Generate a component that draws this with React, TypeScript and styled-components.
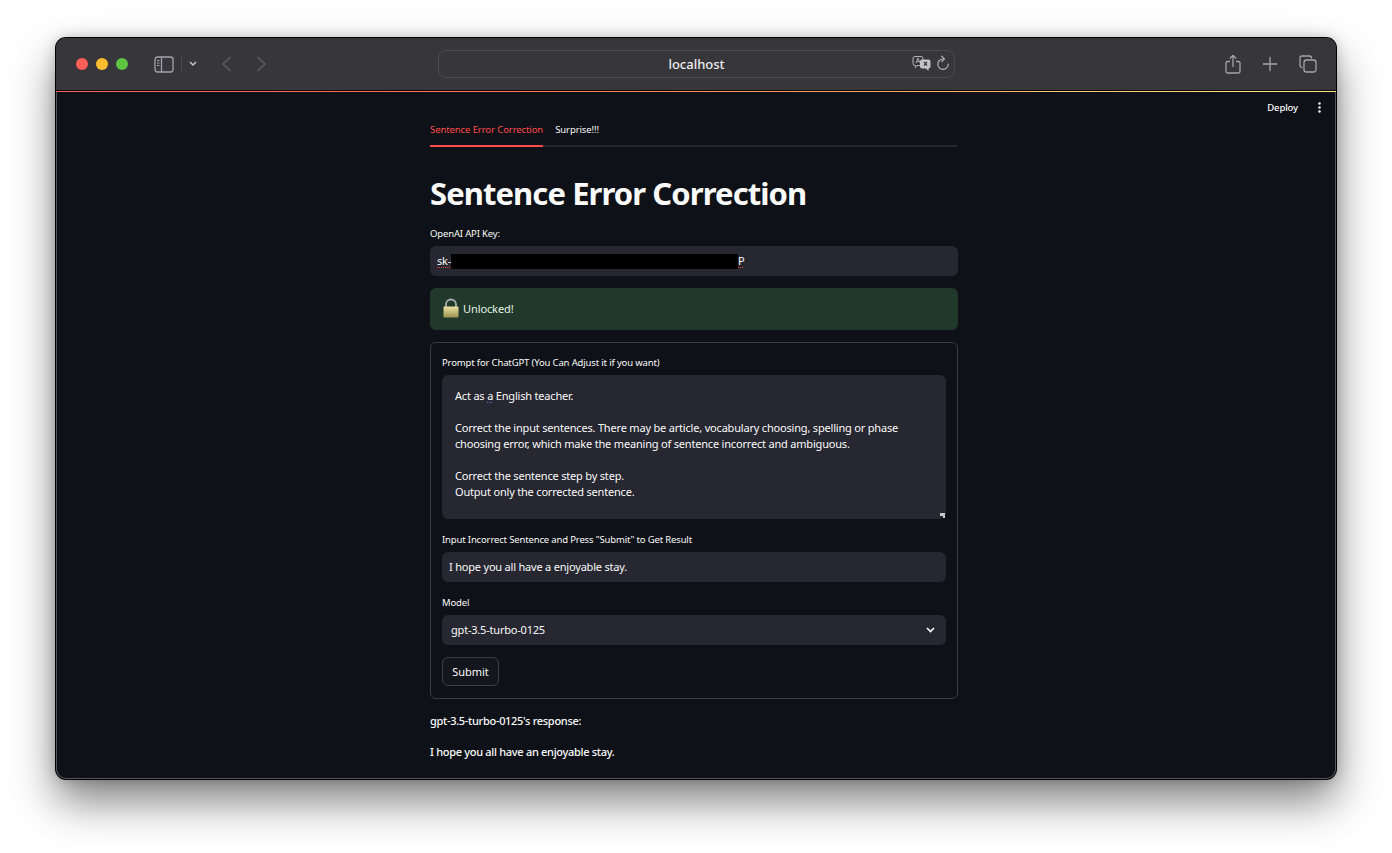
import React from "react";
import styled, { createGlobalStyle } from "styled-components";

const GlobalStyle = createGlobalStyle`
  html, body {
    margin: 0;
    padding: 0;
    background: #fff;
  }
  body {
    font-family: "Noto Sans", "Open Sans", sans-serif;
    color: #fafafa;
  }
`;

const Desktop = styled.div`
  width: 1392px;
  height: 853px;
  padding: 38px 56px 0;
  box-sizing: border-box;
  overflow: hidden;
`;

const Browser = styled.div`
  width: 1280px;
  height: 741px;
  border-radius: 10px;
  overflow: hidden;
  display: flex;
  flex-direction: column;
  background: #0e1117;
  box-shadow:
    0 0 0 1px #000,
    inset 0 0 0 1px #55555a,
    0 22px 44px rgba(0, 0, 0, 0.5),
    0 0 14px rgba(0, 0, 0, 0.22);
`;

const TitleBar = styled.div`
  height: 53px;
  flex: none;
  background: #37363b;
  display: flex;
  align-items: center;
  position: relative;
  border-bottom: 1px solid #0b0b0d;
  box-sizing: border-box;
`;

const Lights = styled.div`
  display: flex;
  gap: 8px;
  margin-left: 20px;
`;

const Light = styled.span<{ $color: string }>`
  width: 12px;
  height: 12px;
  border-radius: 50%;
  background: ${(p) => p.$color};
`;

const ToolIcon = styled.svg<{ $gap?: number }>`
  display: block;
  flex: none;
  margin-left: ${(p) => p.$gap ?? 0}px;
`;

const ToolDivider = styled.span`
  width: 1px;
  height: 18px;
  margin-left: 7px;
  background: #4a494e;
`;

const AddressBar = styled.div`
  position: absolute;
  left: 382px;
  top: 12px;
  width: 517px;
  height: 28px;
  box-sizing: border-box;
  border: 1px solid #4b4a50;
  border-radius: 8px;
  display: flex;
  align-items: center;
  justify-content: center;
  font-size: 13px;
  font-weight: 500;
  color: #eeeeef;
`;

const AddressIcons = styled.div`
  position: absolute;
  right: 4px;
  top: 4px;
  display: flex;
  align-items: center;
  gap: 5px;
`;

const RightTools = styled.div`
  margin-left: auto;
  margin-right: 19px;
  display: flex;
  align-items: center;
  gap: 22px;
`;

const Decoration = styled.div`
  height: 1px;
  flex: none;
  background: linear-gradient(90deg, #ff5f57, #ff7a4d 40%, #ffe98a);
`;

const Page = styled.div`
  flex: 1;
  min-height: 0;
  overflow: hidden;
  position: relative;
  display: flex;
  justify-content: center;
  padding-right: 4px;
`;

const AppHeader = styled.div`
  position: absolute;
  top: 9px;
  right: 15px;
  display: flex;
  align-items: center;
  gap: 20px;
  font-size: 9.5px;
  letter-spacing: -0.12px;
  font-weight: 500;
  color: #fafafa;
`;

const Column = styled.main`
  width: 528px;
  padding-top: 25px;
  display: flex;
  flex-direction: column;
`;

const Tabs = styled.div`
  display: flex;
  gap: 12px;
  height: 28px;
  border-bottom: 2px solid #262730;
`;

const Tab = styled.div<{ $active?: boolean }>`
  font-size: 9.5px;
  letter-spacing: -0.09px;
  line-height: 26px;
  height: 28px;
  color: ${(p) => (p.$active ? "#ff4b4b" : "#fafafa")};
  box-shadow: ${(p) => (p.$active ? "0 2px 0 #ff4b4b" : "none")};
`;

const Title = styled.h1`
  margin: 26px 0 0;
  font-size: 31px;
  letter-spacing: -0.92px;
  line-height: 40px;
  font-weight: 700;
  color: #fafafa;
`;

const FieldLabel = styled.label`
  display: block;
  font-size: 9.5px;
  letter-spacing: -0.15px;
  line-height: 14px;
  color: #fafafa;
  padding-top: 1px;
  margin-bottom: 5px;
`;

const KeyBlock = styled.div`
  margin-top: 13px;
`;

const InputBox = styled.div`
  height: 30px;
  box-sizing: border-box;
  padding: 0 7px 2px;
  border-radius: 6px;
  background: #262730;
  display: flex;
  align-items: center;
  font-size: 11px;
  letter-spacing: -0.2px;
  color: #fafafa;
`;

const Squiggle = styled.span<{ $color?: string }>`
  text-decoration: underline dotted ${(p) => p.$color ?? "#e8403c"} 1px;
  text-underline-offset: 2px;
`;

const Redacted = styled.span`
  display: inline-block;
  width: 287px;
  height: 15px;
  margin-top: 2px;
  background: #000;
`;

const Alert = styled.div`
  margin-top: 12px;
  height: 42px;
  box-sizing: border-box;
  padding: 0 0 2px 13px;
  border-radius: 6px;
  background: #21392b;
  display: flex;
  align-items: center;
  gap: 4px;
  font-size: 11px;
  letter-spacing: -0.1px;
  color: #e6f1e6;
`;

const FormCard = styled.div`
  margin-top: 12px;
  height: 357px;
  box-sizing: border-box;
  border: 1px solid #3c3e46;
  border-radius: 6px;
  padding: 12px 11px;
`;

const PromptArea = styled.div`
  position: relative;
  height: 144px;
  box-sizing: border-box;
  border-radius: 6px;
  background: #262730;
  padding: 13px 13px;
  font-size: 11px;
  letter-spacing: -0.19px;
  line-height: 16px;
  white-space: pre-wrap;
`;

const ResizeGrip = styled.svg`
  position: absolute;
  right: 1px;
  bottom: 1px;
`;

const FieldGroup = styled.div`
  margin-top: 13px;
`;

const SelectBox = styled(InputBox)`
  justify-content: space-between;
  padding: 0 11px 2px 9px;

  svg {
    margin-top: 2px;
  }
`;

const SubmitButton = styled.button`
  display: block;
  margin-top: 12px;
  width: 57px;
  height: 29px;
  padding: 0;
  border: 1px solid #3c3e46;
  border-radius: 6px;
  background: #13161d;
  color: #fafafa;
  font-family: inherit;
  font-size: 11px;
`;

const ResponseText = styled.p`
  margin: 14px 0 0;
  font-size: 11px;
  letter-spacing: -0.3px;
  font-weight: 500;
  line-height: 16px;
  color: #fafafa;

  & + & {
    margin-top: 15px;
  }
`;

const iconStroke = "#a5a4a8";

function SidebarIcon() {
  return (
    <ToolIcon $gap={26} width="20" height="17" viewBox="0 0 20 17" fill="none">
      <rect x="1" y="1" width="18" height="15" rx="2.5" stroke={iconStroke} strokeWidth="1.3" />
      <path d="M7.5 1v15" stroke={iconStroke} strokeWidth="1.3" />
      <path d="M3 4.5h2.5M3 7h2.5M3 9.5h2.5" stroke={iconStroke} strokeWidth="1.1" />
    </ToolIcon>
  );
}

function TranslateIcon() {
  return (
    <svg width="19" height="17" viewBox="0 0 19 17" fill="none">
      <path d="M3 1.5h6a2 2 0 0 1 2 2v5a2 2 0 0 1-2 2H5l-1.5 2v-2H3a2 2 0 0 1-2-2v-5a2 2 0 0 1 2-2z" stroke="#b5b4b8" strokeWidth="1" />
      <path d="M4 8l2-5 2 5M4.8 6.4h2.4" stroke="#b5b4b8" strokeWidth="0.9" />
      <path d="M10 4.5h6.5a2 2 0 0 1 2 2v5a2 2 0 0 1-2 2V16l-2.5-2.5H10a2 2 0 0 1-2-2v-5a2 2 0 0 1 2-2z" fill="#c4c3c7" />
      <path d="M12 7l3 3.6M15 7l-3 3.6" stroke="#37363b" strokeWidth="1.2" />
    </svg>
  );
}

function ReloadIcon() {
  return (
    <svg width="14" height="17" viewBox="0 0 14 17" fill="none">
      <path d="M7 4a5.2 5.2 0 1 0 5.2 5.2" stroke="#b5b4b8" strokeWidth="1.2" strokeLinecap="round" />
      <path d="M5.6 1.2L8.4 4 5.6 6.6" stroke="#b5b4b8" strokeWidth="1.2" strokeLinecap="round" strokeLinejoin="round" />
    </svg>
  );
}

function LockIcon() {
  return (
    <svg width="16" height="20" viewBox="0 0 16 20">
      <defs>
        <linearGradient id="lockBody" x1="0" y1="0" x2="0" y2="1">
          <stop offset="0" stopColor="#ece2a4" />
          <stop offset="1" stopColor="#9c9350" />
        </linearGradient>
      </defs>
      <path d="M3 10V6.5a5 5 0 0 1 10 0V10" fill="none" stroke="#a9adb3" strokeWidth="1.8" />
      <rect x="0.5" y="8.5" width="15" height="11" rx="1" fill="url(#lockBody)" />
    </svg>
  );
}

const PROMPT_REST = ` English teacher.

Correct the input sentences. There may be article, vocabulary choosing, spelling or phase
choosing error, which make the meaning of sentence incorrect and ambiguous.

Correct the sentence step by step.
Output only the corrected sentence.`;

export default function App() {
  return (
    <>
      <GlobalStyle />
      <Desktop>
        <Browser>
          <TitleBar>
            <Lights>
              <Light $color="#ff5f57" />
              <Light $color="#febc2e" />
              <Light $color="#5ec442" />
            </Lights>
            <SidebarIcon />
            <ToolDivider />
            <ToolIcon $gap={7} width="8" height="6" viewBox="0 0 8 6" fill="none">
              <path d="M1 1l3 3 3-3" stroke="#c8c7cb" strokeWidth="1.5" />
            </ToolIcon>
            <ToolIcon $gap={24} width="11" height="16" viewBox="0 0 11 16" fill="none">
              <path d="M9.5 1L2 8l7.5 7" stroke="#5f5e63" strokeWidth="1.5" />
            </ToolIcon>
            <ToolIcon $gap={24} width="11" height="16" viewBox="0 0 11 16" fill="none">
              <path d="M1.5 1L9 8l-7.5 7" stroke="#5f5e63" strokeWidth="1.5" />
            </ToolIcon>
            <AddressBar>
              localhost
              <AddressIcons>
                <TranslateIcon />
                <ReloadIcon />
              </AddressIcons>
            </AddressBar>
            <RightTools>
              <svg width="16" height="20" viewBox="0 0 16 20" fill="none">
                <path d="M5 7.5H2.5a1.5 1.5 0 0 0-1.5 1.5v8.5A1.5 1.5 0 0 0 2.5 19h11a1.5 1.5 0 0 0 1.5-1.5V9a1.5 1.5 0 0 0-1.5-1.5H11" stroke={iconStroke} strokeWidth="1.3" />
                <path d="M8 13V1.5M4.8 4.5L8 1.3l3.2 3.2" stroke={iconStroke} strokeWidth="1.3" />
              </svg>
              <svg width="14" height="14" viewBox="0 0 14 14" fill="none">
                <path d="M7 0v14M0 7h14" stroke={iconStroke} strokeWidth="1.3" />
              </svg>
              <svg width="18" height="18" viewBox="0 0 18 18" fill="none">
                <path d="M3.5 12.5H3a2 2 0 0 1-2-2V3a2 2 0 0 1 2-2h7.5a2 2 0 0 1 2 2v.5" stroke={iconStroke} strokeWidth="1.3" />
                <rect x="5" y="5" width="12" height="12" rx="2.5" stroke={iconStroke} strokeWidth="1.3" />
              </svg>
            </RightTools>
          </TitleBar>
          <Decoration />
          <Page>
            <AppHeader>
              Deploy
              <svg width="3" height="11" viewBox="0 0 3 11" fill="#fafafa">
                <circle cx="1.5" cy="1.5" r="1.2" />
                <circle cx="1.5" cy="5.5" r="1.2" />
                <circle cx="1.5" cy="9.5" r="1.2" />
              </svg>
            </AppHeader>
            <Column>
              <Tabs>
                <Tab $active>Sentence Error Correction</Tab>
                <Tab>Surprise!!!</Tab>
              </Tabs>
              <Title>Sentence Error Correction</Title>
              <KeyBlock>
                <FieldLabel>OpenAI API Key:</FieldLabel>
                <InputBox>
                  <Squiggle>sk-</Squiggle>
                  <Redacted />
                  <Squiggle>P</Squiggle>
                </InputBox>
              </KeyBlock>
              <Alert>
                <LockIcon />
                Unlocked!
              </Alert>
              <FormCard>
                <FieldLabel>Prompt for ChatGPT (You Can Adjust it if you want)</FieldLabel>
                <PromptArea>
                  Act as <Squiggle $color="#3f7fe0">a</Squiggle>
                  {PROMPT_REST}
                  <ResizeGrip width="5" height="5" viewBox="0 0 5 5">
                    <path d="M0 0h5v5H3V3H0z" fill="#c8c8cc" />
                  </ResizeGrip>
                </PromptArea>
                <FieldGroup>
                  <FieldLabel>Input Incorrect Sentence and Press "Submit" to Get Result</FieldLabel>
                  <InputBox>I hope you all have a enjoyable stay.</InputBox>
                </FieldGroup>
                <FieldGroup>
                  <FieldLabel>Model</FieldLabel>
                  <SelectBox>
                    gpt-3.5-turbo-0125
                    <svg width="9" height="6" viewBox="0 0 9 6" fill="none">
                      <path d="M1 1l3.5 3.5L8 1" stroke="#fafafa" strokeWidth="1.6" />
                    </svg>
                  </SelectBox>
                </FieldGroup>
                <SubmitButton>Submit</SubmitButton>
              </FormCard>
              <ResponseText>gpt-3.5-turbo-0125's response:</ResponseText>
              <ResponseText>I hope you all have an enjoyable stay.</ResponseText>
            </Column>
          </Page>
        </Browser>
      </Desktop>
    </>
  );
}
